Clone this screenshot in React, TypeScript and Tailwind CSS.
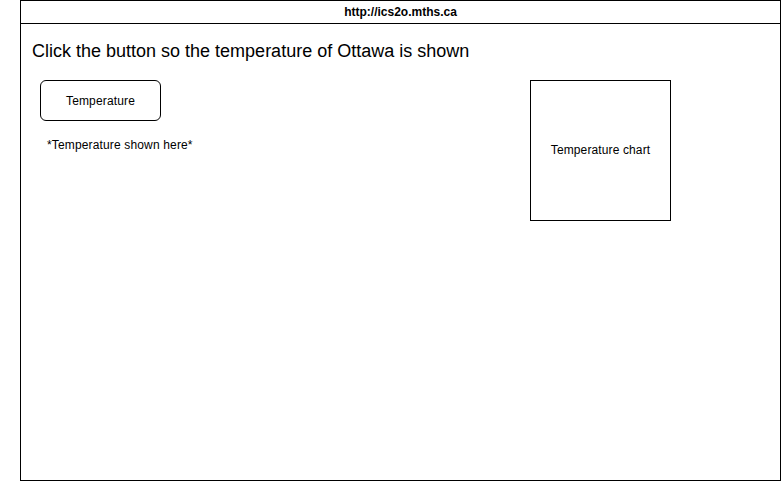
export default function App() {
  return (
    <div className="w-[781px] h-[481px] bg-white" style={{ fontFamily: '"Liberation Sans", Arial, sans-serif' }}>
      <div className="ml-[20px] w-[761px] h-[481px] border border-black flex flex-col">
        <div className="h-[23px] border-b border-black flex items-center justify-center text-[12px] font-bold text-black">
          http://ics2o.mths.ca
        </div>
        <div className="mt-[16px] pl-[11px] h-[22px] leading-[22px] text-[18px] text-black">
          Click the button so the temperature of Ottawa is shown
        </div>
        <div className="mt-[18px] flex pl-[19px]">
          <div className="w-[490px] flex flex-col">
            <div className="w-[121px] h-[41px] border border-black rounded-[6px] flex items-center justify-center text-[12px] tracking-[0.15px] text-black">
              Temperature
            </div>
            <div className="mt-[17px] pl-[7px] h-[14px] leading-[14px] text-[12px] tracking-[0.15px] text-black">
              *Temperature shown here*
            </div>
          </div>
          <div className="w-[141px] h-[141px] border border-black flex items-center justify-center text-[12px] tracking-[0.12px] text-black">
            <span className="-mt-[2px]">Temperature chart</span>
          </div>
        </div>
      </div>
    </div>
  );
}
